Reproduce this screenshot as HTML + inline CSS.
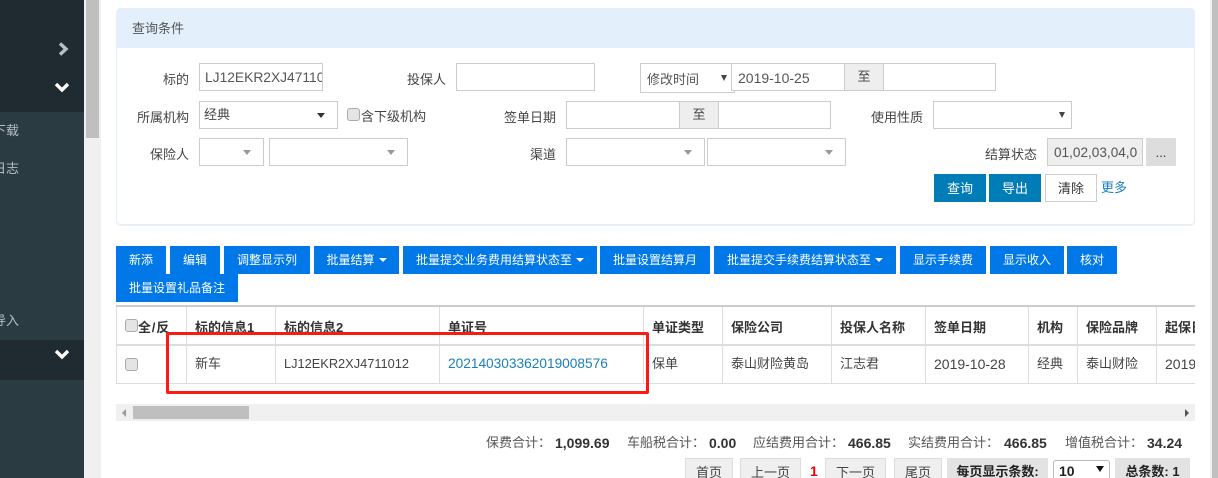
<!DOCTYPE html>
<html><head><meta charset="utf-8">
<style>
html,body{margin:0;padding:0;width:1218px;height:478px;overflow:hidden;background:#fff}
body{position:relative;font:13px/18px "Liberation Sans","Noto Sans CJK SC",sans-serif;color:#444}
div,a{position:absolute;box-sizing:border-box;white-space:nowrap}
.t{height:18px;line-height:18px}
.r{text-align:right}
.i{border:1px solid #ccc;background:#fff;height:28px;overflow:hidden}
.l{font-size:14px;font-family:"Liberation Sans",sans-serif}
.b{background:#0078e7;color:#fff;height:28px;line-height:29px;text-align:center;font-size:12px}
.q{background:#007cb6;font-size:13px;line-height:29px}
.c{width:0;height:0;border-left:4px solid transparent;border-right:4px solid transparent;border-top:5px solid #999}
.d{border-top-color:#333}
.cw{width:0;height:0;border-top:4px solid #fff;border-left:4px solid transparent;border-right:4px solid transparent;display:inline-block;vertical-align:2px;margin-left:4px}
.cb{width:13px;height:13px;border:1px solid #aaa;border-radius:3px;background:#e4e4e4}
.h{font-weight:bold;color:#333}
.v{width:1px;background:#ddd}
.pg{background:#efefef;border:1px solid #ddd;border-bottom:0;height:26px;text-align:center;line-height:27px;color:#444}
</style></head><body>
<!-- sidebar -->
<div style="left:0;top:0;width:84px;height:478px;background:#2a3b42"></div>
<div style="left:0;top:0;width:84px;height:112px;background:#1f2b30"></div>
<div style="left:0;top:340px;width:84px;height:40px;background:#1f2b30"></div>
<svg style="position:absolute;left:57px;top:42px" width="14" height="14"><path d="M3 1.5L9 7L3 12.5" fill="none" stroke="#b9c0c3" stroke-width="3.4"/></svg>
<svg style="position:absolute;left:54px;top:81px" width="16" height="14"><path d="M2 3L8 9L14 3" fill="none" stroke="#fff" stroke-width="3.4"/></svg>
<svg style="position:absolute;left:54px;top:348px" width="16" height="14"><path d="M2 3L8 9L14 3" fill="none" stroke="#fff" stroke-width="3.4"/></svg>
<div class="t" style="left:-7px;top:122px;color:#b5bfc3">下载</div>
<div class="t" style="left:-7px;top:160px;color:#b5bfc3">日志</div>
<div class="t" style="left:-7px;top:312px;color:#b5bfc3">导入</div>
<!-- scrollbars -->
<div style="left:84px;top:0;width:17px;height:478px;background:#f0f0f0"></div>
<div style="left:86px;top:0;width:13px;height:138px;background:#bfbfbf"></div>
<div style="left:1210px;top:0;width:8px;height:478px;background:#f0f0f0"></div>
<div style="left:1212px;top:0;width:6px;height:478px;background:#c0c0c0"></div>
<!-- panel -->
<div style="left:116px;top:8px;width:1079px;height:218px;border:1px solid #e3effb;border-bottom:2px solid #e9eff6;border-radius:5px;background:#fff"></div>
<div style="left:116px;top:8px;width:1079px;height:40px;background:#e3effb;border-radius:5px 5px 0 0"></div>
<div class="t" style="left:132px;top:20px;color:#555">查询条件</div>
<div class="t r" style="left:140px;top:71px;width:49px">标的</div>
<div class="t r" style="left:120px;top:109px;width:69px">所属机构</div>
<div class="t r" style="left:140px;top:146px;width:49px">保险人</div>
<div class="i l" style="left:199px;top:63px;width:124px;padding:0 5px;line-height:28px;color:#555;font-size:13.8px"><span style="display:block;overflow:hidden;width:117px">LJ12EKR2XJ4711012</span></div>
<div class="i" style="left:199px;top:101px;width:139px;line-height:26px;padding-left:4px;color:#444">经典</div>
<div class="c d" style="left:317px;top:113px"></div>
<div class="cb" style="left:347px;top:108px"></div>
<div class="t" style="left:361px;top:108px">含下级机构</div>
<div class="i" style="left:199px;top:138px;width:65px"></div><div class="c" style="left:243px;top:150px"></div>
<div class="i" style="left:269px;top:138px;width:139px"></div><div class="c" style="left:387px;top:150px"></div>
<div class="t" style="left:407px;top:71px">投保人</div>
<div class="i" style="left:456px;top:63px;width:139px"></div>
<div class="i" style="left:640px;top:63px;width:95px;height:30px;line-height:31px;padding-left:6px;color:#555">修改时间</div>
<div class="c" style="left:721px;top:75px;border-top-color:#444;border-left-width:3px;border-right-width:3px;border-top-width:6px"></div>
<div class="i l" style="left:731px;top:63px;width:114px;line-height:28px;padding-left:6px;color:#555">2019-10-25</div>
<div class="i" style="left:844px;top:63px;width:40px;background:#eee;text-align:center;line-height:25px">至</div>
<div class="i" style="left:883px;top:63px;width:113px"></div>
<div class="t r" style="left:490px;top:109px;width:66px">签单日期</div>
<div class="i" style="left:566px;top:101px;width:114px"></div>
<div class="i" style="left:679px;top:101px;width:40px;background:#eee;text-align:center;line-height:25px">至</div>
<div class="i" style="left:718px;top:101px;width:113px"></div>
<div class="t r" style="left:490px;top:146px;width:66px">渠道</div>
<div class="i" style="left:566px;top:138px;width:139px"></div><div class="c" style="left:684px;top:150px"></div>
<div class="i" style="left:707px;top:138px;width:139px"></div><div class="c" style="left:825px;top:150px"></div>
<div class="t" style="left:871px;top:109px">使用性质</div>
<div class="i" style="left:933px;top:101px;width:139px"></div>
<div class="c" style="left:1059px;top:112px;border-top-color:#444;border-left-width:3px;border-right-width:3px;border-top-width:6px"></div>
<div class="t" style="left:985px;top:146px">结算状态</div>
<div class="i l" style="left:1047px;top:138px;width:96px;background:#eee;line-height:28px;padding-left:6px;color:#555;font-size:13.6px"><span style="display:block;overflow:hidden;width:83px">01,02,03,04,05</span></div>
<div style="left:1146px;top:138px;width:30px;height:28px;background:#ddd;text-align:center;line-height:30px;color:#333">...</div>
<div class="b q" style="left:934px;top:174px;width:52px">查询</div>
<div class="b q" style="left:989px;top:174px;width:52px">导出</div>
<div class="i" style="left:1045px;top:174px;width:52px;text-align:center;line-height:27px;color:#333">清除</div>
<div class="t" style="left:1101px;top:179px;color:#1a7fb8">更多</div>
<!-- toolbar -->
<div class="b" style="left:116px;top:246px;width:50px">新添</div>
<div class="b" style="left:170px;top:246px;width:50px">编辑</div>
<div class="b" style="left:224px;top:246px;width:86px">调整显示列</div>
<div class="b" style="left:314px;top:246px;width:85px">批量结算<span class="cw"></span></div>
<div class="b" style="left:403px;top:246px;width:194px">批量提交业务费用结算状态至<span class="cw"></span></div>
<div class="b" style="left:600px;top:246px;width:110px">批量设置结算月</div>
<div class="b" style="left:714px;top:246px;width:182px">批量提交手续费结算状态至<span class="cw"></span></div>
<div class="b" style="left:900px;top:246px;width:86px">显示手续费</div>
<div class="b" style="left:990px;top:246px;width:74px">显示收入</div>
<div class="b" style="left:1067px;top:246px;width:50px">核对</div>
<div class="b" style="left:116px;top:274px;width:122px">批量设置礼品备注</div>
<!-- table -->
<div style="left:116px;top:305px;width:1079px;height:2px;background:#ccc"></div>
<div style="left:116px;top:344px;width:1079px;height:2px;background:#ddd"></div>
<div style="left:116px;top:383px;width:1079px;height:1px;background:#ddd"></div>
<div class="v" style="left:116px;top:307px;height:77px"></div>
<div class="v" style="left:186px;top:307px;height:77px"></div>
<div class="v" style="left:275px;top:307px;height:77px"></div>
<div class="v" style="left:439px;top:307px;height:77px"></div>
<div class="v" style="left:643px;top:307px;height:77px"></div>
<div class="v" style="left:722px;top:307px;height:77px"></div>
<div class="v" style="left:831px;top:307px;height:77px"></div>
<div class="v" style="left:925px;top:307px;height:77px"></div>
<div class="v" style="left:1028px;top:307px;height:77px"></div>
<div class="v" style="left:1077px;top:307px;height:77px"></div>
<div class="v" style="left:1156px;top:307px;height:77px"></div>
<div class="cb" style="left:125px;top:319px"></div>
<div class="t h" style="left:138px;top:319px;letter-spacing:.8px">全/反</div>
<div class="t h" style="left:195px;top:319px">标的信息1</div>
<div class="t h" style="left:284px;top:319px">标的信息2</div>
<div class="t h" style="left:448px;top:319px">单证号</div>
<div class="t h" style="left:652px;top:319px">单证类型</div>
<div class="t h" style="left:731px;top:319px">保险公司</div>
<div class="t h" style="left:840px;top:319px">投保人名称</div>
<div class="t h" style="left:934px;top:319px">签单日期</div>
<div class="t h" style="left:1037px;top:319px">机构</div>
<div class="t h" style="left:1086px;top:319px">保险品牌</div>
<div class="t h" style="left:1165px;top:319px;width:30px;overflow:hidden">起保日期</div>
<div class="cb" style="left:125px;top:358px"></div>
<div class="t" style="left:195px;top:355px">新车</div>
<div class="t l" style="left:284px;top:355px;font-size:12.8px">LJ12EKR2XJ4711012</div>
<div class="t l" style="left:448px;top:355px;color:#1a7fb8;font-size:13.7px">202140303362019008576</div>
<div class="t" style="left:652px;top:355px">保单</div>
<div class="t" style="left:731px;top:355px">泰山财险黄岛</div>
<div class="t" style="left:840px;top:355px">江志君</div>
<div class="t l" style="left:934px;top:355px">2019-10-28</div>
<div class="t" style="left:1037px;top:355px">经典</div>
<div class="t" style="left:1086px;top:355px">泰山财险</div>
<div class="t l" style="left:1165px;top:355px;width:30px;overflow:hidden">2019-10-28</div>
<!-- red annotation box -->
<div style="left:166px;top:332px;width:483px;height:62px;border:3px solid #fb1a10;border-radius:2px"></div>
<!-- h scroll -->
<div style="left:116px;top:404px;width:1079px;height:17px;background:#f0f0f0"></div>
<div style="left:133px;top:406px;width:116px;height:13px;background:#bfbfbf"></div>
<div style="left:122px;top:409px;width:0;height:0;border-top:4px solid transparent;border-bottom:4px solid transparent;border-right:4px solid #999"></div>
<div style="left:1185px;top:409px;width:0;height:0;border-top:4px solid transparent;border-bottom:4px solid transparent;border-left:4px solid #555"></div>
<!-- totals -->
<div class="t" style="left:486px;top:434px;color:#555">保费合计：</div><div class="t l h" style="left:555px;top:434px">1,099.69</div>
<div class="t" style="left:627px;top:434px;color:#555">车船税合计：</div><div class="t l h" style="left:709px;top:434px">0.00</div>
<div class="t" style="left:753px;top:434px;color:#555">应结费用合计：</div><div class="t l h" style="left:848px;top:434px">466.85</div>
<div class="t" style="left:908px;top:434px;color:#555">实结费用合计：</div><div class="t l h" style="left:1004px;top:434px">466.85</div>
<div class="t" style="left:1065px;top:434px;color:#555">增值税合计：</div><div class="t l h" style="left:1147px;top:434px">34.24</div>
<!-- pagination -->
<div class="pg" style="left:685px;top:458px;width:48px">首页</div>
<div class="pg" style="left:740px;top:458px;width:61px">上一页</div>
<div class="t l" style="left:810px;top:462px;color:#e00;font-weight:bold">1</div>
<div class="pg" style="left:825px;top:458px;width:61px">下一页</div>
<div class="pg" style="left:894px;top:458px;width:48px">尾页</div>
<div class="pg h" style="left:947px;top:458px;width:101px;background:#e3e3e3;border:0;color:#222;line-height:28px">每页显示条数:</div>
<div style="left:1053px;top:460px;width:57px;height:24px;border:1px solid #bbb;border-radius:3px;font:bold 14px/21px 'Liberation Sans',sans-serif;padding-left:5px;color:#222">10</div>
<div class="c d" style="left:1096px;top:466px;border-top-color:#111;border-top-width:6px"></div>
<div class="pg h" style="left:1115px;top:458px;width:75px;background:#e3e3e3;border:0;color:#222;line-height:28px">总条数: 1</div>
</body></html>
